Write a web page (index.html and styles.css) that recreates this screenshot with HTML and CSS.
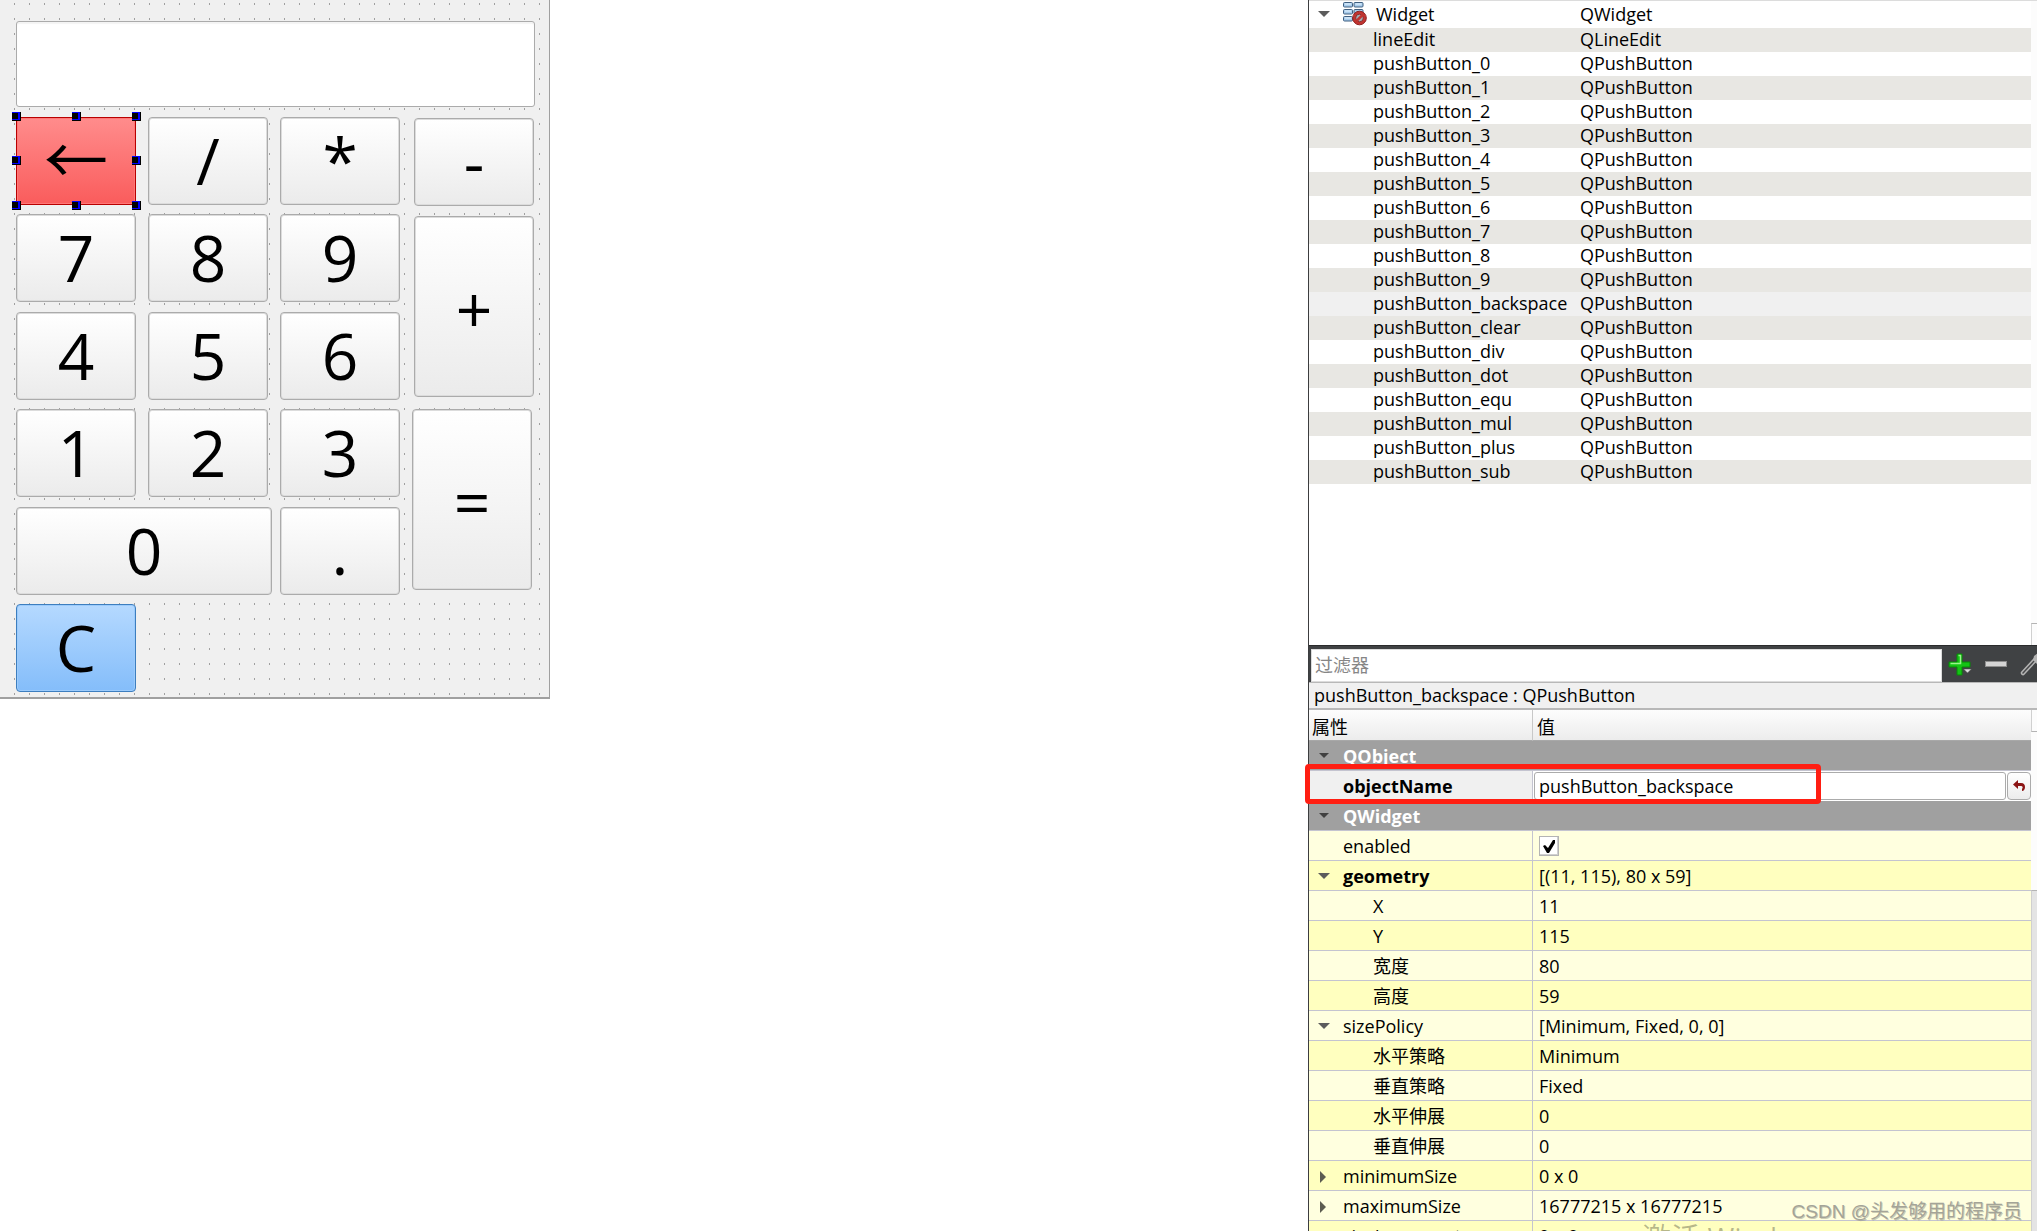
FILE: index.html
```html
<!DOCTYPE html>
<html lang="zh-CN">
<head>
<meta charset="utf-8">
<title>Qt Designer</title>
<link rel="stylesheet" href="styles.css">
</head>
<body>
<svg class="defs" aria-hidden="true">
  <symbol id="open" viewBox="0 0 12 6"><path d="M0 0h12L6 6z" fill="currentColor"/></symbol>
  <symbol id="shut" viewBox="0 0 6 12"><path d="M0 0v12L6 6z" fill="currentColor"/></symbol>
</svg>
<div class="workspace">
  <main class="canvas">
    <form class="form">
      <input class="display" type="text" aria-label="lineEdit">
      <div class="keys">
        <div class="pad">
          <div class="selected">
            <button type="button" class="key back">←</button>
            <i class="handle n w"></i><i class="handle n c"></i><i class="handle n e"></i>
            <i class="handle m w"></i><i class="handle m e"></i>
            <i class="handle s w"></i><i class="handle s c"></i><i class="handle s e"></i>
          </div>
          <button type="button" class="key">/</button>
          <button type="button" class="key">*</button>
          <button type="button" class="key">7</button>
          <button type="button" class="key">8</button>
          <button type="button" class="key">9</button>
          <button type="button" class="key">4</button>
          <button type="button" class="key">5</button>
          <button type="button" class="key">6</button>
          <button type="button" class="key">1</button>
          <button type="button" class="key">2</button>
          <button type="button" class="key">3</button>
          <button type="button" class="key zero">0</button>
          <button type="button" class="key">.</button>
          <button type="button" class="key clear">C</button>
        </div>
        <div class="side">
          <button type="button" class="key">-</button>
          <button type="button" class="key tall plus">+</button>
          <button type="button" class="key tall equals">=</button>
        </div>
      </div>
    </form>
  </main>

  <aside class="dock">
    <section class="inspector">
      <table class="tree">
        <colgroup><col class="tree-name"><col></colgroup>
        <tbody>
        <tr class="root"><td><div class="root-cell"><svg class="arrow-open" ><use href="#open"/></svg>
          <svg class="layout-icon" viewBox="0 0 24 24">
            <g fill="#a9cdec" stroke="#3f5f80" stroke-width="1">
              <rect x=".5" y=".5" width="9" height="4.500" rx="1"/><rect x="11" y=".5" width="9" height="4.500" rx="1"/>
              <rect x=".5" y="7.500" width="9" height="4.500" rx="1"/><rect x="11" y="7.500" width="9" height="4.500" rx="1"/>
              <rect x=".5" y="14.500" width="9" height="4.500" rx="1"/>
            </g>
            <path d="M2 2h6M12.500 2h6M2 9h6M2 16h6" stroke="#e9f5ff"/>
            <circle cx="16.500" cy="16" r="6.800" fill="#c23430" stroke="#8f1f1f"/>
            <circle cx="16.500" cy="16" r="3.800" fill="#a5adb5" stroke="#7d2020" stroke-width=".8"/>
            <path d="M13.500 19l6-6" stroke="#c23430" stroke-width="2.500"/>
          </svg><span>Widget</span></div></td><td>QWidget</td></tr>
        <tr><td>lineEdit</td><td>QLineEdit</td></tr>
        <tr><td>pushButton_0</td><td>QPushButton</td></tr>
        <tr><td>pushButton_1</td><td>QPushButton</td></tr>
        <tr><td>pushButton_2</td><td>QPushButton</td></tr>
        <tr><td>pushButton_3</td><td>QPushButton</td></tr>
        <tr><td>pushButton_4</td><td>QPushButton</td></tr>
        <tr><td>pushButton_5</td><td>QPushButton</td></tr>
        <tr><td>pushButton_6</td><td>QPushButton</td></tr>
        <tr><td>pushButton_7</td><td>QPushButton</td></tr>
        <tr><td>pushButton_8</td><td>QPushButton</td></tr>
        <tr><td>pushButton_9</td><td>QPushButton</td></tr>
        <tr class="current"><td>pushButton_backspace</td><td>QPushButton</td></tr>
        <tr><td>pushButton_clear</td><td>QPushButton</td></tr>
        <tr><td>pushButton_div</td><td>QPushButton</td></tr>
        <tr><td>pushButton_dot</td><td>QPushButton</td></tr>
        <tr><td>pushButton_equ</td><td>QPushButton</td></tr>
        <tr><td>pushButton_mul</td><td>QPushButton</td></tr>
        <tr><td>pushButton_plus</td><td>QPushButton</td></tr>
        <tr><td>pushButton_sub</td><td>QPushButton</td></tr>
        </tbody>
      </table>
      <div class="scroll"><div class="scroll-step bottom"></div></div>
    </section>

    <div class="filter-bar">
      <input class="filter" type="text" placeholder="过滤器" aria-label="过滤器">
      <div class="tools">
        <button type="button" class="tool" aria-label="添加"><svg width="24" height="24" viewBox="0 0 24 24">
          <path d="M9 1h5v8h8v5h-8v8H9v-8H1V9h8z" fill="#14c414" stroke="#078a07"/>
          <path d="M10.500 2.500h2v8h-10" fill="none" stroke="#9af58c" stroke-width="1.500"/>
          <path d="M15.500 16h8l-4 4z" fill="#ddd" stroke="#444" stroke-width=".5"/></svg></button>
        <button type="button" class="tool" aria-label="移除"><svg width="24" height="24" viewBox="0 0 24 24">
          <rect x="1.500" y="8.500" width="21" height="5" fill="#d4d4d4" stroke="#8e8e8e"/></svg></button>
        <button type="button" class="tool" aria-label="配置"><svg width="24" height="24" viewBox="0 0 24 24">
          <path d="M3 20L15 7" stroke="#b4b4b4" stroke-width="4.500" stroke-linecap="round"/>
          <path d="M3 20L15 7" stroke="#4a4b4d" stroke-width="1.500" stroke-linecap="round"/>
          <path d="M13 7l1-4 4-3v5l3 2 3-2-2 5-5 1z" fill="#b4b4b4"/></svg></button>
      </div>
    </div>
    <div class="object-label">pushButton_backspace : QPushButton</div>

    <section class="properties">
      <table class="props">
        <colgroup><col class="prop-name"><col></colgroup>
        <thead><tr><th>属性</th><th>值</th></tr></thead>
        <tbody>
        <tr class="group"><th colspan="2"><svg class="arrow-open"><use href="#open"/></svg>QObject</th></tr>
        <tr class="edit"><th><label for="objectName">objectName</label></th><td><div class="editor"><input id="objectName" type="text" value="pushButton_backspace"><button type="button" class="reset" aria-label="重置"><svg width="12" height="12" viewBox="0 0 12 12"><path d="M0 4.500L5 0v3h3c3 0 4 2 4 4 0 2-1 4-3 4V9c1-1 1-3-1-3H5v3z" fill="#8c1515"/></svg></button></div></td></tr>
        <tr class="group"><th colspan="2"><svg class="arrow-open"><use href="#open"/></svg>QWidget</th></tr>
        <tr><th><label for="enabled">enabled</label></th><td><input id="enabled" class="check" type="checkbox" checked></td></tr>
        <tr><th class="changed"><svg class="arrow-open"><use href="#open"/></svg>geometry</th><td>[(11, 115), 80 x 59]</td></tr>
        <tr><th class="child">X</th><td>11</td></tr>
        <tr><th class="child">Y</th><td>115</td></tr>
        <tr><th class="child">宽度</th><td>80</td></tr>
        <tr><th class="child">高度</th><td>59</td></tr>
        <tr><th><svg class="arrow-open"><use href="#open"/></svg>sizePolicy</th><td>[Minimum, Fixed, 0, 0]</td></tr>
        <tr><th class="child">水平策略</th><td>Minimum</td></tr>
        <tr><th class="child">垂直策略</th><td>Fixed</td></tr>
        <tr><th class="child">水平伸展</th><td>0</td></tr>
        <tr><th class="child">垂直伸展</th><td>0</td></tr>
        <tr><th><svg class="arrow-shut"><use href="#shut"/></svg>minimumSize</th><td>0 x 0</td></tr>
        <tr><th><svg class="arrow-shut"><use href="#shut"/></svg>maximumSize</th><td>16777215 x 16777215</td></tr>
        <tr><th><svg class="arrow-shut"><use href="#shut"/></svg>sizeIncrement</th><td>0 x 0</td></tr>
        </tbody>
      </table>
      <div class="scroll"><div class="scroll-step top"></div><div class="scroll-gap"></div><div class="scroll-thumb"></div></div>
      <div class="highlight"></div>
    </section>
  </aside>
</div>
<div class="activate">激活 Windows</div>
<div class="credit">CSDN @头发够用的程序员</div>
</body>
</html>
```
FILE: styles.css
```css
* { box-sizing: border-box; }
body {
  margin: 0;
  height: 100vh;
  overflow: hidden;
  position: relative;
  background: #fff;
  color: #000;
  font: 18px/24px "Open Sans", "Noto Sans", "Noto Sans CJK SC", sans-serif;
}
button, input { font: inherit; color: inherit; margin: 0; }
.defs { position: absolute; width: 0; height: 0; }
.workspace {
  display: grid;
  grid-template-columns: minmax(550px, 1fr) 729px;
  height: 100%;
}

/* Form under design */
.form {
  width: 550px;
  padding: 21px 15px 5px 16px;
  border-right: 1px solid #a0a0a0;
  border-bottom: 2px solid #a0a0a0;
  /* one 1x2 grid dot in every 15px tile */
  background: linear-gradient(#f0f0f0 13px, transparent 0) 0 5px / 15px 15px, linear-gradient(90deg, #f0f0f0 14px, #a0a0a0 0) 0 0 / 15px 15px;
}
.display {
  display: block;
  width: 519px;
  height: 86px;
  border: 1px solid #ababab;
  border-radius: 3px;
  background: #fff;
  box-shadow: inset 0 2px 1px #f4f4f4;
}
.keys { display: flex; gap: 12px; padding-top: 10px; }
.pad {
  display: grid;
  grid-template-columns: repeat(3, 120px);
  grid-template-rows: 88px 89px 88px 89px 88px 88px;
  gap: 9px 12px;
  align-items: start;
}
.side {
  display: flex;
  flex-direction: column;
  align-items: flex-end;
  width: 122px;
  padding-top: 1px;
}
.key {
  width: 120px;
  height: 88px;
  padding: 0;
  border: 1px solid #ababab;
  border-radius: 4px;
  background: linear-gradient(#fff, #ebebeb);
  box-shadow: inset 0 0 0 1px #dcdcdc;
  font-size: 64px;
  line-height: 84px;
  text-align: center;
}
.tall { height: 181px; padding-top: 4px; }
.plus { margin-top: 10px; }
.equals { margin-top: 12px; align-self: flex-start; }
.zero { grid-column: span 2; width: 256px; }
.clear {
  border-color: #3d7ebf;
  background: linear-gradient(#b5d9ff, #84bdfa);
  box-shadow: inset 0 0 0 1px #9ccbfb;
}
.back {
  display: block;
  padding-bottom: 10px;
  border-color: #b80000;
  border-radius: 2px;
  background: linear-gradient(#ff8c8c, #fa5c5c);
  box-shadow: inset 0 0 0 1px #f77;
  font-family: "Noto Sans CJK SC", sans-serif;
  line-height: 76px;
}
.selected { position: relative; }
.handle {
  position: absolute;
  width: 9px;
  height: 9px;
  border: solid #000;
  border-width: 0 1px 1px 0;
  background: linear-gradient(#000, #000) 0 1px / 6px 6px no-repeat, #00f;
}
.n { top: -5px; }
.m { top: 39px; }
.s { top: 84px; }
.w { left: -4px; }
.c { left: 56px; }
.e { left: 116px; }

/* Docked panels */
.dock {
  display: flex;
  flex-direction: column;
  min-width: 0;
  border-left: 1px solid #3c3d3f;
}
table { border-collapse: separate; border-spacing: 0; table-layout: fixed; flex: 1; width: 100%; }
td, th { padding: 0; text-align: left; font-weight: 400; white-space: nowrap; overflow: hidden; }
.arrow-open { width: 12px; height: 6px; color: #5c5c5c; }
.arrow-shut { width: 6px; height: 12px; color: #5c5c50; }

.inspector { display: flex; align-items: flex-start; height: 645px; border-top: 1px solid #dcdcdc; flex-shrink: 0; }
.tree-name { width: 271px; }
.tree td { height: 24px; line-height: 22px; padding-bottom: 2px; }
.tree td:first-child { padding-left: 64px; }
.tree .root td { height: 27px; }
.tree .root td:first-child { padding-left: 9px; }
.tree tr:nth-child(even) { background: #e8e7e3; }
.tree .current { background: #f0f0f0; }
.root-cell { display: flex; align-items: center; }
.layout-icon { width: 24px; height: 24px; margin: 0 9px 0 13px; }

.scroll { display: flex; flex-direction: column; align-self: stretch; width: 6px; background: #fcfcfc; }
.scroll-step { height: 22px; border-left: 1px solid #d0d0d0; }
.scroll-step.bottom { margin-top: auto; border-top: 1px solid #b4b4b4; }
.scroll-step.top { border-bottom: 1px solid #b4b4b4; }
.scroll-gap { height: 158px; }
.scroll-thumb { flex: 1; border-top: 1px solid #b4b4b4; border-left: 1px solid #d0d0d0; background: #e4e4e4; }

.filter-bar { display: flex; flex-shrink: 0; height: 37px; padding: 3px 0 0 2px; background: #404244; border-top: 1px solid #2a2b2c; }
.filter {
  flex: 1;
  min-width: 0;
  height: 33px;
  padding: 0 3px 2px;
  border: 1px solid #dcdcdc;
  background: #fff;
}
.filter::placeholder { color: #868686; opacity: 1; }
.tools { display: flex; gap: 12px; width: 95px; padding: 4px 0 0 6px; overflow: hidden; }
.tool { flex: none; width: 24px; height: 24px; padding: 0; border: 0; background: none; line-height: 0; }
.object-label {
  flex-shrink: 0;
  height: 28px;
  padding: 1px 5px 2px;
  line-height: 22px;
  border-top: 1px solid #b8b8b8;
  border-bottom: 2px solid #b8b8b8;
  background: #f0f0f0;
}

.properties { position: relative; display: flex; align-items: flex-start; }
.prop-name { width: 224px; }
.props thead th {
  height: 31px;
  padding: 4px 0 0 4px;
  border-bottom: 1px solid #a8a8a8;
  background: linear-gradient(#fdfdfd, #ececec);
}
.props thead th:first-child { padding-left: 3px; border-right: 1px solid #c8c8c8; }
.props tbody th, .props tbody td { height: 30px; border-bottom: 1px solid #c4c4d0; }
.props tbody tr { background: #ffffbf; }
.props tbody tr:nth-child(even) { background: #ffffdf; }
.props tbody th { padding-left: 34px; border-right: 1px solid #c4c4d0; }
.props tbody td { padding-left: 6px; }
.props tbody th.child { padding-left: 64px; }
.props tbody th.changed { font-weight: 700; }
.props th .arrow-open { margin: 0 13px 4px -25px; vertical-align: middle; }
.props th .arrow-shut { margin: 0 17px 2px -23px; vertical-align: middle; }
.props tbody .group { background: #a0a0a0; }
.props tbody .group th { color: #fff; font-weight: 700; border-right: 0; }
.props .group .arrow-open { color: #404040; width: 10px; height: 5px; margin: 0 14px 4px -24px; }
.props tbody tr.edit { background: #f0f0f0; }
.props tbody .edit th { font-weight: 700; border-bottom-color: #f0f0f0; }
.props tbody .edit td { padding: 0 0 0 1px; border: 0; background: #fff; }
.editor { display: flex; gap: 1px; height: 28px; }
.editor input { flex: 1; min-width: 0; padding: 0 4px; border: 1px solid #ababab; border-radius: 3px; background: #fff; }
.reset { width: 24px; padding: 0; border: 1px solid #ababab; border-radius: 4px; background: linear-gradient(#fff, #ececec); line-height: 0; }
.check {
  appearance: none;
  display: block;
  width: 20px;
  height: 20px;
  border: 1px solid #b4b4b4;
  box-shadow: inset -1px -1px #d0d0d0;
  background: #fff url("data:image/svg+xml,%3Csvg xmlns='http://www.w3.org/2000/svg' viewBox='0 0 18 18'%3E%3Cpath d='M3 9l2-1 3 3 5-8h2v3l-6 10H7z'/%3E%3C/svg%3E") center / 18px no-repeat;
}
.highlight {
  position: absolute;
  top: 54px;
  left: -4px;
  width: 516px;
  height: 40px;
  border: 5px solid #ff1e12;
  border-radius: 4px;
  pointer-events: none;
}

/* Marks over the screen */
.activate {
  position: absolute;
  right: 215px;
  bottom: -27px;
  width: 180px;
  color: #00000048;
  font-size: 29px;
  line-height: 40px;
  white-space: nowrap;
}
.credit {
  position: absolute;
  right: 15px;
  bottom: 7px;
  color: #a4a498;
  font: 19px/24px "Liberation Sans", "Noto Sans CJK SC", sans-serif;
  text-shadow: 1px 1px #77776c60;
}
```
